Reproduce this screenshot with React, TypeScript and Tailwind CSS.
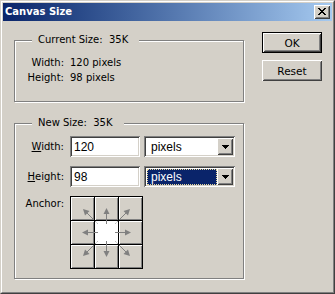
const raised =
  "shadow-[inset_1px_1px_0_#ffffff,inset_-1px_-1px_0_#404040,inset_2px_2px_0_#d4d0c8,inset_-2px_-2px_0_#808080]";

function Triangle() {
  return (
    <svg width="7" height="4" viewBox="0 0 7 4">
      <path d="M0 0h7v1H0z M1 1h5v1H1z M2 2h3v1H2z M3 3h1v1H3z" fill="#000" />
    </svg>
  );
}

function CloseBtn() {
  return (
    <div className={`w-[16px] h-[14px] bg-[#d4d0c8] ${raised} flex items-center justify-center`}>
      <svg width="8" height="7" viewBox="0 0 8 7" className="-mt-px">
        <path
          d="M0 0h2v1H0z M6 0h2v1H6z M1 1h2v1H1z M5 1h2v1H5z M2 2h4v1H2z M3 3h2v1H3z M2 4h4v1H2z M1 5h2v1H1z M5 5h2v1H5z M0 6h2v1H0z M6 6h2v1H6z"
          fill="#000"
        />
      </svg>
    </div>
  );
}

function Group({ legend, h, children }: { legend: string; h: string; children: React.ReactNode }) {
  return (
    <div className={`relative w-[230px] border border-[#808080] shadow-[1px_1px_0_#ffffff,inset_1px_1px_0_#ffffff] ${h}`}>
      <span className="absolute left-[17px] top-[-7px] bg-[#d4d0c8] pl-[6px] pr-[11px] whitespace-pre leading-[12px]">
        {legend}
      </span>
      {children}
    </div>
  );
}

const sunken =
  "shadow-[inset_1px_1px_0_#808080,inset_-1px_-1px_0_#ffffff,inset_2px_2px_0_#404040,inset_-2px_-2px_0_#d4d0c8]";

function Select({ focused }: { focused?: boolean }) {
  return (
    <div className={`ml-[4px] w-[91px] h-[21px] bg-white ${sunken} p-[2px] flex font-['Liberation_Sans',Arial,sans-serif] text-[12px]`}>
      <div className="flex-1 flex">
        {focused ? (
          <div className="mt-[1px] ml-px mb-0 flex-1 flex items-center bg-[#0a246a] text-white border border-dotted border-[#e8d89a] pl-[3px]">
            pixels
          </div>
        ) : (
          <div className="flex-1 flex items-center pl-[5px]">pixels</div>
        )}
      </div>
      <div className={`w-[16px] h-full bg-[#d4d0c8] ${raised} flex items-center justify-center`}>
        <Triangle />
      </div>
    </div>
  );
}

function Input({ value }: { value: string }) {
  return (
    <div
      className={`ml-[6px] w-[70px] h-[21px] bg-white ${sunken} flex items-center pl-[4px] font-['Liberation_Sans',Arial,sans-serif] text-[12px]`}
    >
      {value}
    </div>
  );
}

function Arrows() {
  const straight = (
    <g>
      <line x1="36.5" y1="28" x2="36.5" y2="17" stroke="#808080" strokeWidth="1" />
      <polygon points="33.5,18 39.5,18 36.5,12" fill="#808080" />
    </g>
  );
  const diag = (
    <g>
      <line x1="27.5" y1="27.5" x2="25" y2="25" stroke="#808080" strokeWidth="1" strokeDasharray="1 1" />
      <line x1="24" y1="24" x2="17" y2="17" stroke="#808080" strokeWidth="1" />
      <polygon points="13,13 19.5,15 15,19.5" fill="#808080" />
    </g>
  );
  return (
    <svg className="absolute left-0 top-0 pointer-events-none" width="73" height="73" viewBox="0 0 73 73">
      {straight}
      <g transform="rotate(90 36.5 36.5)">{straight}</g>
      <g transform="rotate(180 36.5 36.5)">{straight}</g>
      <g transform="rotate(270 36.5 36.5)">{straight}</g>
      {diag}
      <g transform="translate(73 0) scale(-1 1)">{diag}</g>
      <g transform="translate(0 73) scale(1 -1)">{diag}</g>
      <g transform="translate(73 73) scale(-1 -1)">{diag}</g>
    </svg>
  );
}

function AnchorGrid() {
  const cells = Array.from({ length: 9 }, (_, i) => i);
  return (
    <div className="relative ml-[6px] w-[73px] h-[73px] bg-black p-px grid grid-cols-3 gap-px">
      {cells.map((i) =>
        i === 4 ? (
          <div key={i} className="bg-white" />
        ) : (
          <div key={i} className="bg-[#d4d0c8] shadow-[inset_1px_1px_0_#ffffff,inset_-1px_-1px_0_#808080]" />
        )
      )}
      <Arrows />
    </div>
  );
}

export default function App() {
  return (
    <div className="w-[335px] h-[294px] bg-[#d4d0c8] border border-t-[#d4d0c8] border-l-[#d4d0c8] border-b-[#404040] border-r-[#404040] font-['DejaVu_Sans',sans-serif] text-[10px] leading-[12px] text-black select-none">
      <div className="h-full border border-t-white border-l-white border-b-[#808080] border-r-[#808080] p-px flex flex-col">
        <div className="h-[18px] shrink-0 flex items-center justify-between bg-linear-to-r from-[#0a246a] to-[#a6caf0] pl-[2px] pr-[2px]">
          <span className="font-bold text-white text-[10px]">Canvas Size</span>
          <CloseBtn />
        </div>
        <div className="flex">
          <div className="ml-[11px] mt-[19px] flex flex-col">
            <Group legend="Current Size:  35K" h="h-[62px]">
              <div className="pt-[14px]">
                <div className="h-[15px] flex items-center">
                  <span className="w-[49px] text-right">Width:</span>
                  <span className="ml-[6px]">120 pixels</span>
                </div>
                <div className="h-[15px] flex items-center">
                  <span className="w-[49px] text-right">Height:</span>
                  <span className="ml-[6px]">98 pixels</span>
                </div>
              </div>
            </Group>
            <div className="mt-[21px]">
              <Group legend="New Size:  35K" h="h-[156px]">
                <div className="pt-[12px]">
                  <div className="flex items-center h-[21px]">
                    <span className="w-[49px] text-right">
                      <span className="underline">W</span>idth:
                    </span>
                    <Input value="120" />
                    <Select />
                  </div>
                  <div className="flex items-center h-[21px] mt-[9px]">
                    <span className="w-[49px] text-right">
                      <span className="underline">H</span>eight:
                    </span>
                    <Input value="98" />
                    <Select focused />
                  </div>
                  <div className="flex items-start mt-[9px]">
                    <span className="w-[49px] text-right mt-[2px]">Anchor:</span>
                    <AnchorGrid />
                  </div>
                </div>
              </Group>
            </div>
          </div>
          <div className="ml-[18px] mt-[11px] flex flex-col text-[10.5px]">
            <div className="w-[60px] h-[21px] border border-black">
              <div className={`w-full h-full ${raised} flex items-center justify-center`}>OK</div>
            </div>
            <div className={`mt-[7px] w-[60px] h-[21px] ${raised} flex items-center justify-center`}>Reset</div>
          </div>
        </div>
      </div>
    </div>
  );
}
